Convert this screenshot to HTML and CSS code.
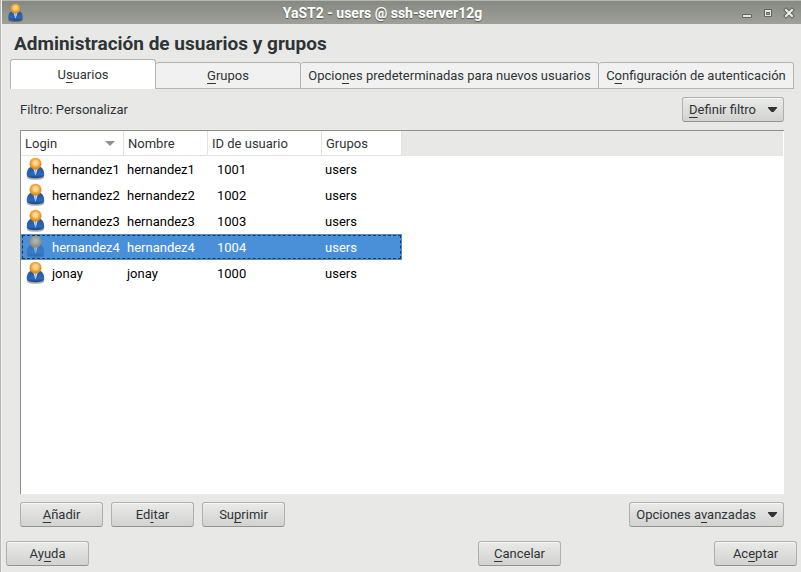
FILE: index.html
```html
<!DOCTYPE html>
<html lang="es">
<head>
<meta charset="utf-8">
<title>YaST2 - users @ ssh-server12g</title>
<link rel="stylesheet" href="styles.css">
</head>
<body>
<svg class="defs" aria-hidden="true">
  <defs>
    <radialGradient id="head" cx=".5" cy=".42" r=".55">
      <stop offset="0" stop-color="#ffd892"/><stop offset=".6" stop-color="#f3ab3c"/><stop offset="1" stop-color="#d08314"/>
    </radialGradient>
    <linearGradient id="coat" x1="0" y1="0" x2="0" y2="1">
      <stop offset="0" stop-color="#2456a0"/><stop offset=".7" stop-color="#2d68b8"/><stop offset="1" stop-color="#1b4583"/>
    </linearGradient>
    <symbol id="user" viewBox="0 0 20 24">
      <ellipse cx="10" cy="20.6" rx="8.8" ry="2.200" fill="#000" opacity=".3"/>
      <path d="M1.300 18.500C1.100 13 3.300 9.500 7 9.500h6c3.700 0 5.900 3.500 5.700 9-.2 1.700-3.700 2.700-8.700 2.700s-8.500-1-8.700-2.700z" fill="url(#coat)"/>
      <path d="M7.500 10.500h5L10 18.500z" fill="#f4f8ff"/>
      <path d="M9.500 11.500h1l.6 4-1.100 3-1.100-3z" fill="#9dbbe2"/>
      <circle cx="10" cy="6.800" r="6" fill="url(#head)"/>
      <circle cx="10" cy="6" r="3" fill="#ffe2ac" opacity=".5"/>
    </symbol>
  </defs>
</svg>
<div class="window">
  <header class="titlebar">
    <svg class="app-icon"><use href="#user"/></svg>
    <span class="caption">YaST2 - users @ ssh-server12g</span>
    <div class="controls">
      <button aria-label="Minimizar"><svg viewBox="0 0 12 12"><path d="M1.500 7.500h9v3h-9z" fill="#e4e4e0" stroke="#62655e"/></svg></button>
      <button aria-label="Maximizar"><svg viewBox="0 0 12 12"><path d="M2.500 2.500h7v7h-7z" fill="#e4e4e0" stroke="#62655e"/><path d="M4.500 5.500h3v2h-3z" fill="#999c94" stroke="#62655e"/></svg></button>
      <button aria-label="Cerrar"><svg viewBox="0 0 12 12"><path d="M3 3l6 6M9 3l-6 6" stroke="#62655e" stroke-width="4" stroke-linecap="square"/><path d="M3 3l6 6M9 3l-6 6" stroke="#eeeeea" stroke-width="2" stroke-linecap="square"/></svg></button>
    </div>
  </header>
  <main>
    <h1>Administración de usuarios y grupos</h1>
    <div class="tabs" role="tablist">
      <button class="tab active" role="tab" aria-selected="true">U<u>s</u>uarios</button>
      <button class="tab" role="tab"><u>G</u>rupos</button>
      <button class="tab wide" role="tab">Opcio<u>n</u>es predeterminadas para nuevos usuarios</button>
      <button class="tab wide" role="tab">C<u>o</u>nfiguración de autenticación</button>
    </div>
    <section class="panel">
      <div class="filter">
        <span>Filtro: Personalizar</span>
        <button class="btn menu"><span><u>D</u>efinir filtro</span><svg viewBox="0 0 9 5"><path d="M0 0h9v1L5.500 5h-2L0 1z"/></svg></button>
      </div>
      <div class="list">
        <div class="list-head"></div>
        <table>
          <colgroup><col class="c-login"><col class="c-name"><col class="c-id"><col class="c-groups"></colgroup>
          <thead>
            <tr>
              <th><div class="sort">Login<svg viewBox="0 0 10 5"><path d="M0 0h10L5 5z"/></svg></div></th>
              <th>Nombre</th><th>ID de usuario</th><th>Grupos</th>
            </tr>
          </thead>
          <tbody>
            <tr><td><div class="login"><svg><use href="#user"/></svg>hernandez1</div></td><td>hernandez1</td><td class="uid">1001</td><td>users</td></tr>
            <tr><td><div class="login"><svg><use href="#user"/></svg>hernandez2</div></td><td>hernandez2</td><td class="uid">1002</td><td>users</td></tr>
            <tr><td><div class="login"><svg><use href="#user"/></svg>hernandez3</div></td><td>hernandez3</td><td class="uid">1003</td><td>users</td></tr>
            <tr class="selected"><td><div class="login"><svg><use href="#user"/></svg>hernandez4</div></td><td>hernandez4</td><td class="uid">1004</td><td>users</td></tr>
            <tr><td><div class="login"><svg><use href="#user"/></svg>jonay</div></td><td>jonay</td><td class="uid">1000</td><td>users</td></tr>
          </tbody>
        </table>
      </div>
      <div class="actions">
        <button class="btn"><u>A</u>ñadir</button>
        <button class="btn">Ed<u>i</u>tar</button>
        <button class="btn">Su<u>p</u>rimir</button>
        <button class="btn menu push"><span>Opciones a<u>v</u>anzadas</span><svg viewBox="0 0 9 5"><path d="M0 0h9v1L5.500 5h-2L0 1z"/></svg></button>
      </div>
    </section>
  </main>
  <footer>
    <button class="btn">Ay<u>u</u>da</button>
    <button class="btn cancel"><u>C</u>ancelar</button>
    <button class="btn">Ac<u>e</u>ptar</button>
  </footer>
</div>
</body>
</html>
```
FILE: styles.css
```css
* { box-sizing: border-box; }

body {
  margin: 0;
  font: 13px/16px Roboto, "Liberation Sans", sans-serif;
  color: #2e3436;
  background: #e8e8e6;
}

button { font: inherit; color: inherit; white-space: nowrap; }
u { text-underline-offset: 3px; text-decoration-skip-ink: none; }
.defs { position: absolute; width: 0; height: 0; }

.window {
  display: flex;
  flex-direction: column;
  min-height: 100vh;
  border-left: 1px solid #b8b8b2;
  box-shadow: inset 1px 0 #f0f0ee;
}

.titlebar {
  display: flex;
  align-items: center;
  height: 24px;
  margin-left: 1px;
  padding: 0 6px 0 5px;
  background: linear-gradient(#868981, #9fa199);
  border-top: 1px solid #b4b6b0;
}
.app-icon { width: 17px; height: 20px; }
.caption {
  flex: 1;
  font-size: 14px;
  font-weight: 700;
  text-align: center;
  color: #fff;
  text-shadow: 0 1px 1px #555850;
}
.controls { display: flex; gap: 9px; }
.controls button { display: flex; padding: 0; border: 0; background: none; }
.controls svg { width: 12px; height: 12px; fill: none; }

main { display: flex; flex: 1; flex-direction: column; padding: 9px 7px 0 9px; }
h1 { margin: 0 4px; font-size: 19px; line-height: 22px; font-weight: 700; }

.tabs { display: flex; align-items: flex-end; height: 34px; padding-top: 4px; }
.tab {
  flex: 0 1 145px;
  height: 27px;
  padding: 0;
  border: 1px solid #b3b5b1;
  border-left-width: 0;
  border-radius: 3px 3px 0 0;
  background: #f1f1f1;
}
.tab.active { flex-basis: 146px; height: 30px; border-left-width: 1px; border-bottom: 0; background: #fff; }
.tab.wide { flex: 1 1 auto; }

.panel { display: flex; flex: 1; flex-direction: column; padding: 8px 10px 0; }
.filter { display: flex; align-items: center; justify-content: space-between; margin-bottom: 8px; }

.btn {
  width: 83px;
  height: 25px;
  padding: 0;
  border: 1px solid #b0b1ae;
  border-bottom-color: #92948f;
  border-radius: 3px;
  background: linear-gradient(#eaeae9, #d2d2d0);
  box-shadow: inset 0 1px #f8f8f7;
}
.btn.menu { display: flex; align-items: center; gap: 12px; width: auto; padding: 0 6px; }
.btn.menu svg { width: 9px; height: 5px; fill: #2e3436; }

.list {
  display: grid;
  grid-template-rows: 25px 1fr;
  flex: 1;
  border-top: 1px solid #8f918d;
  border-left: 1px solid #8f918d;
  background: #fff;
}
.list-head { grid-area: 1 / 1; background: #e8e8e6; border-right: 1px solid #fff; }
table {
  grid-area: 1 / 1 / 3 / 2;
  align-self: start;
  width: 381px;
  table-layout: fixed;
  border-collapse: separate;
  border-spacing: 0;
  color: #000;
}
.c-login { width: 103px; }
.c-name { width: 84px; }
.c-id { width: 114px; }
.c-groups { width: 80px; }
th {
  height: 25px;
  padding: 1px 4px 0;
  background: #fff;
  border-right: 1px solid #e2e2e0;
  border-bottom: 1px solid #e2e2e0;
  color: #2e3436;
  font-weight: 400;
  text-align: left;
}
.sort { display: flex; align-items: center; justify-content: space-between; padding-right: 4px; }
.sort svg { width: 10px; height: 5px; fill: #8e918c; }
td { height: 26px; padding: 2px 3px 0; white-space: nowrap; }
td.uid { padding-left: 9px; }
.login { display: flex; align-items: center; gap: 6px; padding-left: 1px; }
.login svg { flex: none; width: 21px; height: 24px; margin-top: -2px; }
.selected { background: #4a90d9; color: #fff; outline: 1px dashed #263442; outline-offset: -2px; }
.selected svg { opacity: .5; }

.actions { display: flex; gap: 8px; padding-top: 8px; }
.push { margin-left: auto; }

footer { display: flex; padding: 14px 4px 6px 5px; }
.cancel { margin-left: auto; margin-right: 153px; }
```
